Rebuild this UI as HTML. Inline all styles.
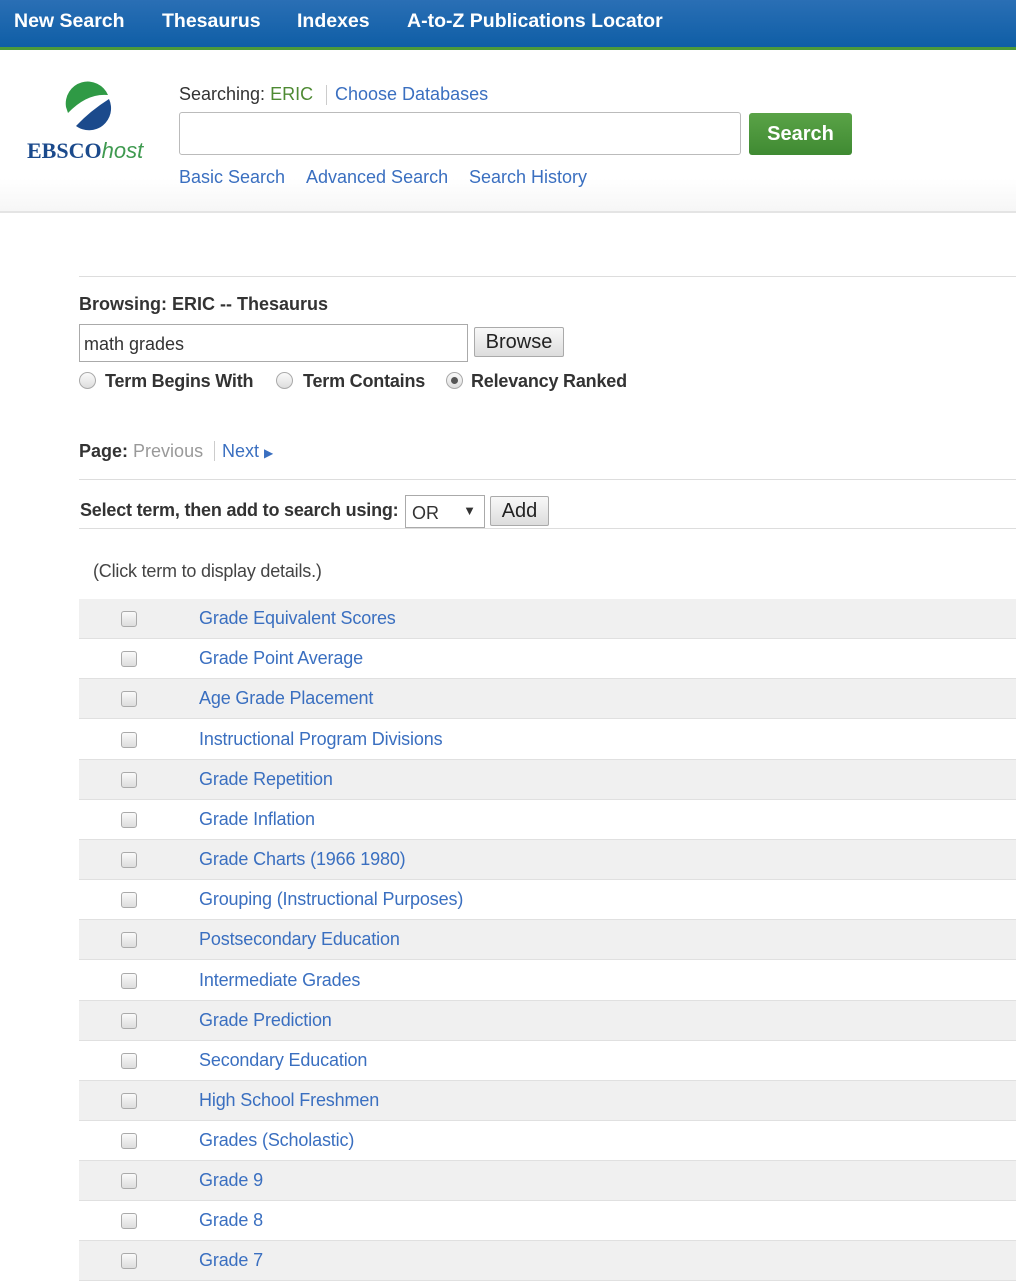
<!DOCTYPE html>
<html><head><style>
*{margin:0;padding:0;box-sizing:border-box}
body{width:1016px;height:1284px;overflow:hidden;background:#fff;font-family:"Liberation Sans",Arial,sans-serif;position:relative;color:#333}
.a{position:absolute;white-space:nowrap}
.nav{position:absolute;left:0;top:0;width:1016px;height:47px;background:linear-gradient(#2a6fb5,#0f5ea6)}
.nav span{position:absolute;top:10px;color:#fff;font-weight:bold;font-size:19.5px}
.gl{position:absolute;left:0;top:47px;width:1016px;height:3px;background:#4c9a3a}
.hdr{position:absolute;left:0;top:50px;width:1016px;height:163px;background:linear-gradient(#fff 80%,#f6f6f6);border-bottom:2px solid #e4e4e4}
.lnk{color:#3a6fc0}
.row{position:absolute;left:79px;width:937px;height:40px;border-bottom:1px solid #e0e0e0}
.row.g{background:#f0f0f0}
.cb{position:absolute;left:42px;top:12px;width:16px;height:16px;border:1px solid #aaa;border-radius:3px;background:linear-gradient(#fafafa,#ddd)}
.row span{position:absolute;left:120px;top:9px;font-size:18px;color:#3a6fc0;letter-spacing:-0.15px}
.rad{position:absolute;width:17px;height:17px;border:1px solid #aaa;border-radius:50%;background:linear-gradient(#fafafa,#ddd)}
.btn{position:absolute;border:1px solid #aaa;border-radius:2px;background:linear-gradient(#f8f8f8,#ddd);font-size:20px;color:#222;text-align:center}
</style></head><body>
<div class="nav">
<span style="left:14px">New Search</span>
<span style="left:162px">Thesaurus</span>
<span style="left:297px">Indexes</span>
<span style="left:407px">A-to-Z Publications Locator</span>
</div>
<div class="gl"></div>
<div class="hdr"></div>
<svg class="a" style="left:62px;top:81px" width="50" height="50" viewBox="0 0 50 50">
<path d="M4 26 A22 22 0 0 1 46 14 Q25 12 6 32 Z" fill="#2f9a45"/>
<path d="M47 18 A22 22 0 0 1 14 45 Q28 30 47 18 Z" fill="#1b4a8c"/>
</svg>
<div class="a" style="left:27px;top:138px;font-family:'Liberation Serif',serif;font-weight:bold;font-size:22px;color:#1b4a8c">EBSCO<i style="font-family:'Liberation Sans',sans-serif;font-weight:normal;color:#3f9a50">host</i></div>
<div class="a" style="left:179px;top:84px;font-size:18px">Searching: <span style="color:#4e8a33">ERIC</span></div>
<div class="a" style="left:326px;top:85px;width:1px;height:20px;background:#ccc"></div>
<div class="a lnk" style="left:335px;top:84px;font-size:18px">Choose Databases</div>
<div class="a" style="left:179px;top:112px;width:562px;height:43px;border:1px solid #bbb;border-radius:3px"></div>
<div class="a" style="left:749px;top:113px;width:103px;height:42px;border-radius:3px;background:linear-gradient(#5aa347,#3f8a32);color:#fff;font-weight:bold;font-size:20px;text-align:center;line-height:42px">Search</div>
<div class="a lnk" style="left:179px;top:167px;font-size:18px">Basic Search</div>
<div class="a lnk" style="left:306px;top:167px;font-size:18px">Advanced Search</div>
<div class="a lnk" style="left:469px;top:167px;font-size:18px">Search History</div>
<div class="a" style="left:79px;top:276px;width:937px;height:1px;background:#ddd"></div>
<div class="a" style="left:79px;top:294px;font-size:18px;font-weight:bold;color:#333">Browsing: ERIC -- Thesaurus</div>
<div class="a" style="left:79px;top:324px;width:389px;height:38px;border:1px solid #aaa;font-size:18px;padding:9px 4px">math grades</div>
<div class="btn" style="left:474px;top:327px;width:90px;height:30px;line-height:28px">Browse</div>
<div class="rad" style="left:79px;top:372px"></div>
<div class="a" style="left:105px;top:371px;font-size:18px;font-weight:bold;letter-spacing:-0.2px">Term Begins With</div>
<div class="rad" style="left:276px;top:372px"></div>
<div class="a" style="left:303px;top:371px;font-size:18px;font-weight:bold;letter-spacing:-0.2px">Term Contains</div>
<div class="rad" style="left:446px;top:372px"><div style="position:absolute;left:4px;top:4px;width:7px;height:7px;border-radius:50%;background:#555"></div></div>
<div class="a" style="left:471px;top:371px;font-size:18px;font-weight:bold;letter-spacing:-0.2px">Relevancy Ranked</div>
<div class="a" style="left:79px;top:441px;font-size:18px"><b>Page:</b> <span style="color:#999">Previous</span></div>
<div class="a" style="left:214px;top:441px;width:1px;height:20px;background:#ccc"></div>
<div class="a lnk" style="left:222px;top:441px;font-size:18px">Next <span style="font-size:12px">▶</span></div>
<div class="a" style="left:79px;top:479px;width:937px;height:1px;background:#ddd"></div>
<div class="a" style="left:80px;top:500px;font-size:18px;font-weight:bold;letter-spacing:-0.2px">Select term, then add to search using:</div>
<div class="a" style="left:405px;top:495px;width:80px;height:33px;border:1px solid #aaa;font-size:18px;padding:7px 6px">OR<span style="position:absolute;right:8px;top:7px;font-size:13px">▼</span></div>
<div class="btn" style="left:490px;top:496px;width:59px;height:30px;line-height:28px">Add</div>
<div class="a" style="left:79px;top:528px;width:937px;height:1px;background:#ddd"></div>
<div class="a" style="left:93px;top:561px;font-size:18px;color:#444;letter-spacing:-0.2px">(Click term to display details.)</div>
<div class="row g" style="top:599px"><div class="cb"></div><span>Grade Equivalent Scores</span></div>
<div class="row" style="top:639px"><div class="cb"></div><span>Grade Point Average</span></div>
<div class="row g" style="top:679px"><div class="cb"></div><span>Age Grade Placement</span></div>
<div class="row" style="top:720px"><div class="cb"></div><span>Instructional Program Divisions</span></div>
<div class="row g" style="top:760px"><div class="cb"></div><span>Grade Repetition</span></div>
<div class="row" style="top:800px"><div class="cb"></div><span>Grade Inflation</span></div>
<div class="row g" style="top:840px"><div class="cb"></div><span>Grade Charts (1966 1980)</span></div>
<div class="row" style="top:880px"><div class="cb"></div><span>Grouping (Instructional Purposes)</span></div>
<div class="row g" style="top:920px"><div class="cb"></div><span>Postsecondary Education</span></div>
<div class="row" style="top:961px"><div class="cb"></div><span>Intermediate Grades</span></div>
<div class="row g" style="top:1001px"><div class="cb"></div><span>Grade Prediction</span></div>
<div class="row" style="top:1041px"><div class="cb"></div><span>Secondary Education</span></div>
<div class="row g" style="top:1081px"><div class="cb"></div><span>High School Freshmen</span></div>
<div class="row" style="top:1121px"><div class="cb"></div><span>Grades (Scholastic)</span></div>
<div class="row g" style="top:1161px"><div class="cb"></div><span>Grade 9</span></div>
<div class="row" style="top:1201px"><div class="cb"></div><span>Grade 8</span></div>
<div class="row g" style="top:1241px"><div class="cb"></div><span>Grade 7</span></div>
</body></html>
